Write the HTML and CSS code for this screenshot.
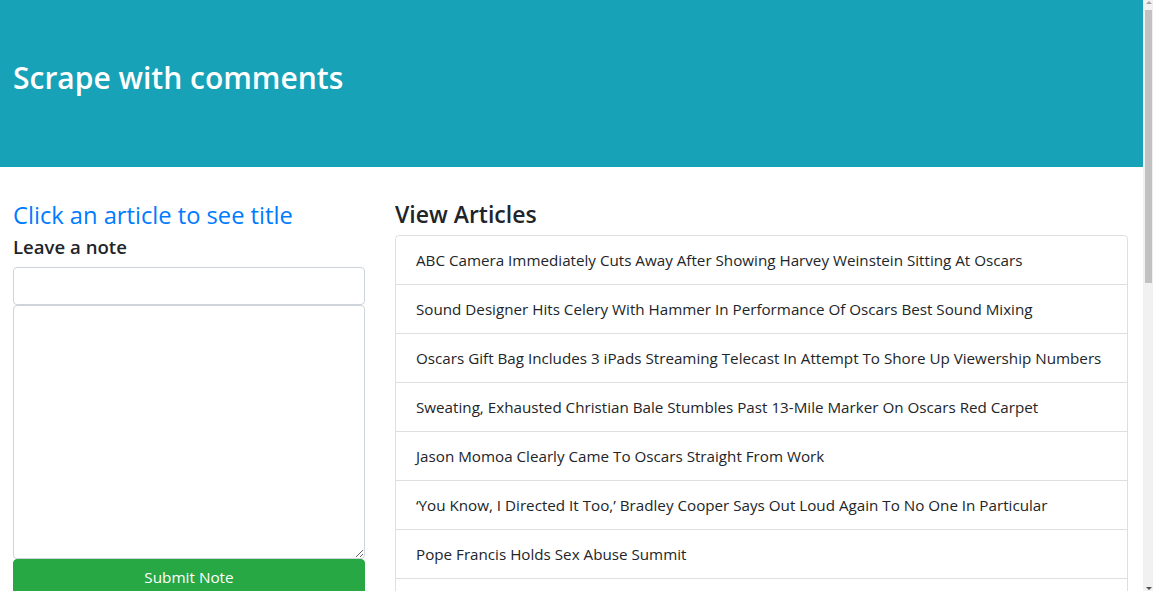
FILE: index.html
```html
<!DOCTYPE html>
<html lang="en">
<head>
<meta charset="utf-8">
<title>Scrape with comments</title>
<link rel="stylesheet" href="styles.css">
</head>
<body>
<div class="shell">
  <div class="page">
    <header class="hero">
      <h1 class="hero-title">Scrape with comments</h1>
    </header>
    <main class="content">
      <section class="col-left">
        <h3 class="note-title">Click an article to see title</h3>
        <h5 class="note-label">Leave a note</h5>
        <input class="field" type="text">
        <textarea class="field area"></textarea>
        <button class="btn-submit" type="button">Submit Note</button>
      </section>
      <section class="col-right">
        <h3 class="list-title">View Articles</h3>
        <ul class="list-group">
          <li class="list-item">ABC Camera Immediately Cuts Away After Showing Harvey Weinstein Sitting At Oscars</li>
          <li class="list-item">Sound Designer Hits Celery With Hammer In Performance Of Oscars Best Sound Mixing</li>
          <li class="list-item">Oscars Gift Bag Includes 3 iPads Streaming Telecast In Attempt To Shore Up Viewership Numbers</li>
          <li class="list-item">Sweating, Exhausted Christian Bale Stumbles Past 13-Mile Marker On Oscars Red Carpet</li>
          <li class="list-item">Jason Momoa Clearly Came To Oscars Straight From Work</li>
          <li class="list-item">‘You Know, I Directed It Too,’ Bradley Cooper Says Out Loud Again To No One In Particular</li>
          <li class="list-item">Pope Francis Holds Sex Abuse Summit</li>
          <li class="list-item empty"></li>
        </ul>
      </section>
    </main>
  </div>
  <div class="scrollbar">
    <div class="arrow up"></div>
    <div class="thumb"></div>
    <div class="track"></div>
    <div class="arrow down"></div>
  </div>
</div>
</body>
</html>
```

FILE: styles.css
```css
html, body {
  margin: 0;
  padding: 0;
  height: 100%;
  overflow: hidden;
}
body {
  font-family: "Open Sans", "Noto Sans", sans-serif;
  color: #212529;
  background: #fff;
}
.shell {
  display: flex;
  height: 591px;
}
.page {
  flex: 1;
  overflow: hidden;
}
.hero {
  height: 167px;
  background: #17a2b8;
  display: flex;
  align-items: center;
  padding-left: 13px;
  box-sizing: border-box;
}
.hero-title {
  margin: 0 0 12px 0;
  color: #fff;
  font-size: 30px;
  font-weight: 600;
  line-height: 1.2;
}
.content {
  display: flex;
  gap: 30px;
  padding: 34px 15px 0 13px;
  align-items: flex-start;
}
.col-left {
  width: 352px;
  flex: none;
  display: flex;
  flex-direction: column;
}
.col-right {
  flex: 1;
}
.note-title {
  margin: 0;
  color: #007bff;
  font-size: 23.7px;
  font-weight: 500;
  line-height: 1.2;
}
.note-label {
  margin: 7px 0 8px;
  font-size: 18.6px;
  font-weight: 600;
  line-height: 1.2;
}
.field {
  display: block;
  box-sizing: border-box;
  width: 100%;
  height: 38px;
  border: 1px solid #ced4da;
  border-radius: 4px;
  background: #fff;
  margin: 0;
  font: inherit;
}
.area {
  height: 254px;
  margin-top: 0;
  resize: vertical;
}
.btn-submit {
  margin-top: 0;
  height: 38px;
  background: #28a745;
  border: 1px solid #28a745;
  border-radius: 4px;
  color: #fff;
  font-family: inherit;
  font-size: 15.3px;
  line-height: 1.5;
  padding: 6px 12px;
}
.list-title {
  margin: 0 0 6px;
  font-size: 23px;
  font-weight: 600;
  line-height: 1.2;
}
.list-group {
  list-style: none;
  margin: 0;
  padding: 0;
  border: 1px solid rgba(0,0,0,.125);
  border-radius: 4px;
}
.list-item {
  padding: 12px 20px;
  font-size: 15.2px;
  line-height: 24px;
  border-top: 1px solid rgba(0,0,0,.125);
}
.list-item:first-child {
  border-top: none;
}
.list-item.empty {
  height: 24px;
}
.scrollbar {
  width: 10px;
  flex: none;
  background: #f1f1f1;
  display: flex;
  flex-direction: column;
  align-items: flex-end;
}
.arrow {
  width: 8px;
  height: 10px;
  flex: none;
  position: relative;
}
.arrow::before {
  content: "";
  position: absolute;
  left: 1px;
  border-left: 3px solid transparent;
  border-right: 3px solid transparent;
}
.arrow.up::before {
  top: 1px;
  border-bottom: 3px solid #a3a3a3;
}
.arrow.down::before {
  bottom: 1px;
  border-top: 3px solid #505050;
}
.thumb {
  width: 7px;
  height: 273px;
  margin-right: 1px;
  background: #c1c1c1;
  flex: none;
}
.track {
  flex: 1;
}
```
